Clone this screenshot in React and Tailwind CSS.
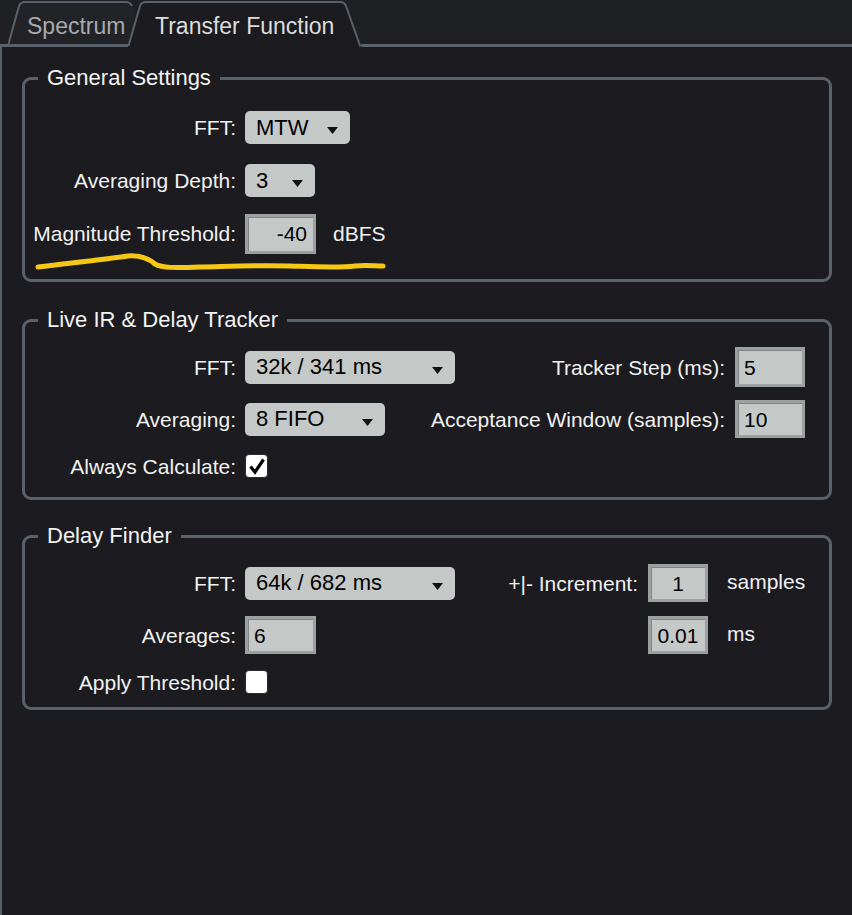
import React from 'react';

const Arrow = () => (
  <svg width="11" height="7" viewBox="0 0 11 7" className="mt-[6px] shrink-0">
    <polygon points="0,0 11,0 5.5,7" fill="#111" />
  </svg>
);

const Select = ({ value, w }) => (
  <div className={`${w} h-[33px] shrink-0 rounded-[5px] bg-[#c4c9c8] text-black text-[22px] leading-none flex items-center justify-between pl-[11px] pr-[12px]`}>
    <span>{value}</span>
    <Arrow />
  </div>
);

const Field = ({ value, w, h, align = 'text-left' }) => (
  <div className={`${w} ${h} ${align} shrink-0 bg-[#c4c9c8] border-[3px] border-[#9ca19f] shadow-[inset_1px_1px_0_#80858a] text-black text-[21px] leading-none flex items-center px-[6px]`}>
    <span className="w-full">{value}</span>
  </div>
);

const Check = ({ on }) => (
  <div className="w-[23px] h-[24px] shrink-0 bg-white rounded-[4px] border border-[#2a2a2a] flex items-center justify-center">
    {on && (
      <svg width="18" height="18" viewBox="0 0 18 18">
        <path d="M2.5 9.5 L7 15 L15.5 2.5" fill="none" stroke="#000" strokeWidth="3.2" />
      </svg>
    )}
  </div>
);

const Label = ({ children }) => (
  <span className="w-[211px] shrink-0 text-right text-[21px] leading-none text-[#f1f1f1] mr-[9px]">{children}</span>
);

const Group = ({ title, className, children }) => (
  <fieldset className={`border-[3px] border-[#59626a] rounded-[9px] ${className}`}>
    <legend className="ml-[13px] px-[9px] text-[22px] leading-[24px] text-[#f3f3f3]">{title}</legend>
    {children}
  </fieldset>
);

export default function App() {
  return (
    <div className="relative w-full min-h-[915px] bg-[#1c1c20] font-['Liberation_Sans',Arial,sans-serif] antialiased select-none">
      {/* tabs */}
      <div className="flex h-[47px] bg-[#1f2023]">
        <div className="w-[8px] border-b-[3px] border-[#59626a]" />
        <div className="relative w-[126px] h-full">
          <svg className="absolute inset-0" width="126" height="47" viewBox="0 0 126 47">
            <path d="M0 46 L11 6 Q12.5 2 17 2 L118 2 Q122 2 124 6 L126 12 L126 47 L0 47 Z" fill="#222327" />
            <path d="M0 45.5 L11 6 Q12.5 2 17 2 L118 2 Q122 2 124 6" fill="none" stroke="#59626a" strokeWidth="2" />
            <path d="M0 45.5 L126 45.5" stroke="#59626a" strokeWidth="3" />
          </svg>
          <span className="relative flex h-full items-center pl-[19px] pt-[5px] text-[23px] text-[#a9aaac]">Spectrum</span>
        </div>
        <div className="relative z-10 -ml-[6px] w-[234px] h-full">
          <svg className="absolute inset-0" width="234" height="47" viewBox="0 0 234 47">
            <path d="M0 47 L12 6 Q13.5 2 18 2 L212 2 Q216.5 2 218 6 L232 47 Z" fill="#1c1c20" />
            <path d="M0.5 46 L12 6 Q13.5 2 18 2 L212 2 Q216.5 2 218 6 L232 45.5 L234 45.5" fill="none" stroke="#59626a" strokeWidth="2" />
          </svg>
          <span className="relative flex h-full items-center pl-[27px] pt-[5px] text-[23px] text-[#dcdcdc]">Transfer Function</span>
        </div>
        <div className="flex-1 border-b-[3px] border-[#59626a]" />
      </div>

      {/* panel */}
      <div className="border-l-2 border-[#59626a] min-h-[868px] px-[20px] pt-[19px]">
        <Group title="General Settings" className="pt-[11px] pb-[19px]">
          <div className="flex items-center h-[53px]">
            <Label>FFT:</Label>
            <Select value="MTW" w="w-[105px]" />
          </div>
          <div className="flex items-center h-[53px]">
            <Label>Averaging Depth:</Label>
            <Select value="3" w="w-[70px]" />
          </div>
          <div className="flex items-center h-[53px]">
            <Label>Magnitude Threshold:</Label>
            <Field value="-40" w="w-[71px]" h="h-[40px]" align="text-right" />
            <span className="ml-[17px] text-[21px] leading-none text-[#f1f1f1]">dBFS</span>
          </div>
        </Group>

        <Group title="Live IR & Delay Tracker" className="mt-[26px] pt-[9px] pb-[10px]">
          <div className="flex items-center h-[52px] pr-[24px]">
            <Label>FFT:</Label>
            <Select value="32k / 341 ms" w="w-[210px]" />
            <div className="ml-auto flex items-center">
              <span className="text-[21px] leading-none text-[#f1f1f1] mr-[10px]">Tracker Step (ms):</span>
              <Field value="5" w="w-[70px]" h="h-[40px]" />
            </div>
          </div>
          <div className="flex items-center h-[52px] pr-[24px]">
            <Label>Averaging:</Label>
            <Select value="8 FIFO" w="w-[140px]" />
            <div className="ml-auto flex items-center">
              <span className="text-[21px] leading-none text-[#f1f1f1] mr-[10px]">Acceptance Window (samples):</span>
              <Field value="10" w="w-[70px]" h="h-[38px]" />
            </div>
          </div>
          <div className="flex items-center h-[42px]">
            <Label>Always Calculate:</Label>
            <Check on />
          </div>
        </Group>

        <Group title="Delay Finder" className="mt-[24px] pt-[9px] pb-[4px]">
          <div className="flex items-center h-[52px] pr-[12px]">
            <Label>FFT:</Label>
            <Select value="64k / 682 ms" w="w-[210px]" />
            <div className="ml-auto flex items-center">
              <span className="text-[21px] leading-none text-[#f1f1f1] mr-[10px]">+|- Increment:</span>
              <Field value="1" w="w-[60px]" h="h-[38px]" align="text-center" />
              <span className="ml-[19px] w-[90px] -mt-[4px] text-[21px] leading-none text-[#f1f1f1]">samples</span>
            </div>
          </div>
          <div className="flex items-center h-[52px] pr-[12px]">
            <Label>Averages:</Label>
            <Field value="6" w="w-[71px]" h="h-[38px]" />
            <div className="ml-auto flex items-center">
              <Field value="0.01" w="w-[60px]" h="h-[38px]" align="text-center" />
              <span className="ml-[19px] w-[90px] -mt-[4px] text-[21px] leading-none text-[#f1f1f1]">ms</span>
            </div>
          </div>
          <div className="flex items-center h-[42px]">
            <Label>Apply Threshold:</Label>
            <Check />
          </div>
        </Group>
      </div>

      {/* hand-drawn highlight */}
      <svg className="absolute inset-0 pointer-events-none" width="852" height="915" viewBox="0 0 852 915">
        <path
          d="M38 267 C70 263 100 260 128 256 C140 255 148 258 155 264 C162 268 175 268 200 267 C240 266 260 265 290 266 C320 267 340 268 355 266 C365 265 375 266 383 266"
          fill="none"
          stroke="#f6c714"
          strokeWidth="5"
          strokeLinecap="round"
        />
      </svg>
    </div>
  );
}
